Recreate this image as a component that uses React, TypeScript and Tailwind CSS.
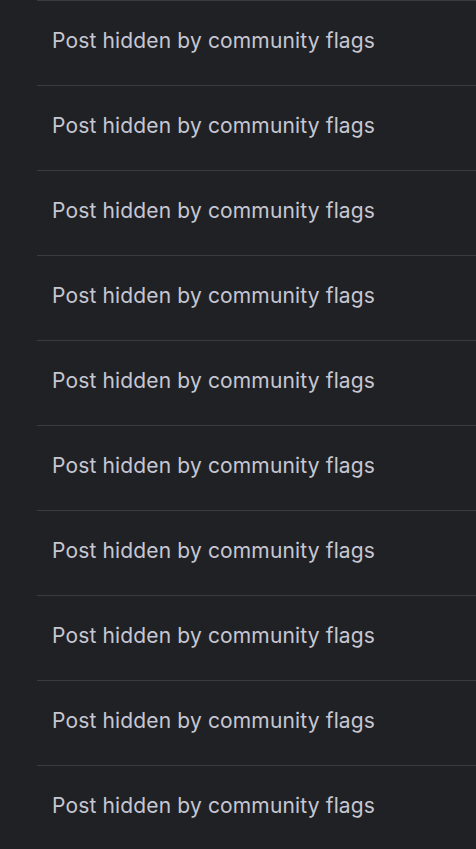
export default function App() {
  const rows = Array.from({ length: 10 });
  return (
    <div className="min-h-[849px] h-[849px] overflow-hidden bg-[#202124] pl-[37px]">
      <div className="flex flex-col">
        {rows.map((_, i) => (
          <div
            key={i}
            className="h-[85px] shrink-0 border-t border-[#3a3b41] flex items-center pl-[15px] pb-[5px]"
          >
            <span
              className="text-[21px] tracking-[0.15px] text-[#c6c7d3] leading-none"
              style={{ fontFamily: "Inter, 'Noto Sans', sans-serif" }}
            >
              Post hidden by community flags
            </span>
          </div>
        ))}
      </div>
    </div>
  );
}
